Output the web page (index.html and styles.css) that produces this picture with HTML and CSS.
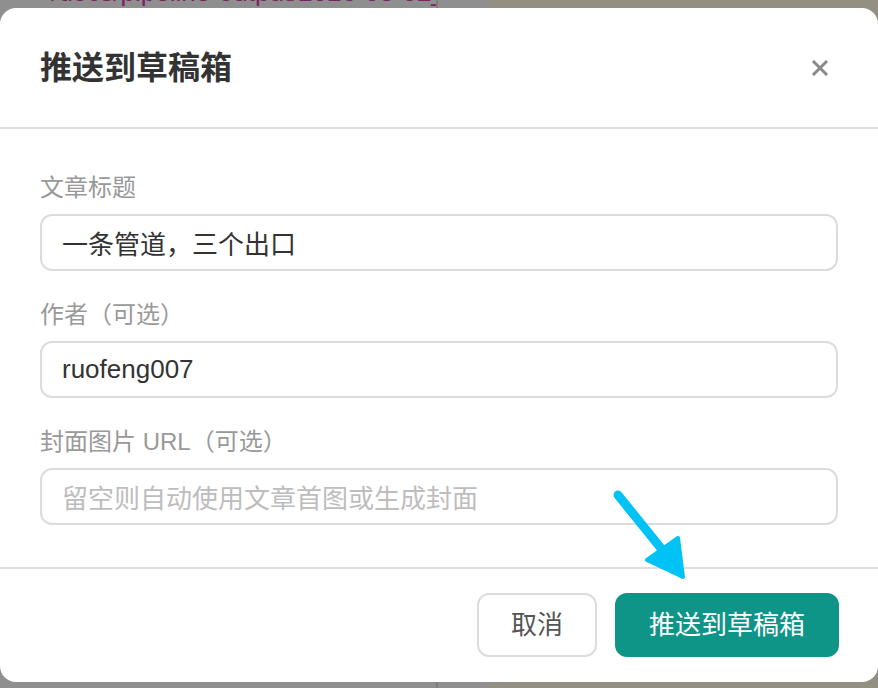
FILE: index.html
```html
<!DOCTYPE html>
<html lang="zh-CN">
<head>
<meta charset="utf-8">
<title>推送到草稿箱</title>
<link rel="stylesheet" href="styles.css">
</head>
<body>
<div class="backdrop">
  <div class="bd-left"><span class="bd-text">~/docs/pipeline-output/2026-03-02_typora</span></div>
  <div class="bd-mid"></div>
  <div class="bd-right"></div>
</div>

<div class="dialog">
  <div class="dialog-header">
    <h2 class="dialog-title">推送到草稿箱</h2>
    <button class="close-btn" aria-label="关闭">
      <svg width="18" height="18" viewBox="0 0 18 18"><path d="M2 2L16 16M16 2L2 16" stroke="#8a8a8a" stroke-width="3" stroke-linecap="butt"/></svg>
    </button>
  </div>
  <div class="dialog-body">
    <div class="field">
      <label class="field-label">文章标题</label>
      <div class="input">一条管道，三个出口</div>
    </div>
    <div class="field">
      <label class="field-label">作者（可选）</label>
      <div class="input">ruofeng007</div>
    </div>
    <div class="field">
      <label class="field-label">封面图片 URL（可选）</label>
      <div class="input placeholder">留空则自动使用文章首图或生成封面</div>
    </div>
  </div>
  <div class="dialog-footer">
    <button class="btn btn-cancel">取消</button>
    <button class="btn btn-primary">推送到草稿箱</button>
  </div>
</div>

<svg class="annot-arrow" width="100" height="110" viewBox="0 0 100 110">
  <line x1="18" y1="15" x2="64" y2="72" stroke="#00c2f5" stroke-width="9" stroke-linecap="round"/>
  <polygon points="47,80 78,58 83,97" fill="#00c2f5" stroke="#00c2f5" stroke-width="4" stroke-linejoin="round"/>
</svg>
</body>
</html>
```

FILE: styles.css
```css
html, body {
  margin: 0;
  padding: 0;
  width: 878px;
  height: 688px;
  overflow: hidden;
}

body {
  position: relative;
  font-family: "Liberation Sans", "Noto Sans CJK SC", sans-serif;
  background: #8f8f8f;
}

.backdrop {
  display: grid;
  grid-template-columns: 438px 50px 1fr;
  height: 688px;
}

.bd-left {
  background: #8f8f8f;
  border-right: 2px solid #7e7e7e;
  overflow: hidden;
}

.bd-text {
  display: block;
  margin-top: -20px;
  padding-left: 36px;
  font-size: 26px;
  line-height: 24px;
  color: #7a2262;
  white-space: nowrap;
}

.bd-mid {
  background: #8f8f8f;
}

.bd-right {
  background: #948f83;
}

.dialog {
  position: absolute;
  left: 0;
  top: 8px;
  width: 878px;
  height: 674px;
  background: #ffffff;
  border-radius: 16px;
  display: flex;
  flex-direction: column;
  box-sizing: border-box;
}

.dialog-header {
  height: 121px;
  box-sizing: border-box;
  border-bottom: 2px solid #dedede;
  padding: 0 49px 0 40px;
  display: flex;
  align-items: center;
  justify-content: space-between;
}

.dialog-title {
  margin: 0;
  font-size: 32px;
  line-height: 40px;
  font-weight: 700;
  color: #333333;
}

.close-btn {
  border: 0;
  background: transparent;
  padding: 0;
  width: 18px;
  height: 18px;
  display: flex;
}

.dialog-body {
  padding: 42px 40px 42px;
  display: flex;
  flex-direction: column;
  gap: 27px;
}

.field {
  display: flex;
  flex-direction: column;
}

.field-label {
  font-size: 24px;
  line-height: 34px;
  color: #999999;
  margin-bottom: 9px;
}

.input {
  height: 57px;
  box-sizing: border-box;
  border: 2px solid #dcdcdc;
  border-radius: 12px;
  padding: 0 20px;
  display: flex;
  align-items: center;
  font-size: 26px;
  color: #333333;
}

.input.placeholder {
  color: #bdbdbd;
}

.dialog-footer {
  border-top: 2px solid #dedede;
  padding: 24px 39px 25px 40px;
  display: flex;
  justify-content: flex-end;
  gap: 18px;
}

.btn {
  height: 64px;
  box-sizing: border-box;
  border-radius: 12px;
  padding: 0 32px;
  font-family: "Liberation Sans", "Noto Sans CJK SC", sans-serif;
  font-size: 26px;
  line-height: 1;
  display: flex;
  align-items: center;
}

.btn-cancel {
  background: #ffffff;
  border: 2px solid #dcdcdc;
  color: #555555;
}

.btn-primary {
  background: #0f9588;
  border: 2px solid #0f9588;
  color: #ffffff;
}

.annot-arrow {
  position: absolute;
  left: 600px;
  top: 480px;
}
```
